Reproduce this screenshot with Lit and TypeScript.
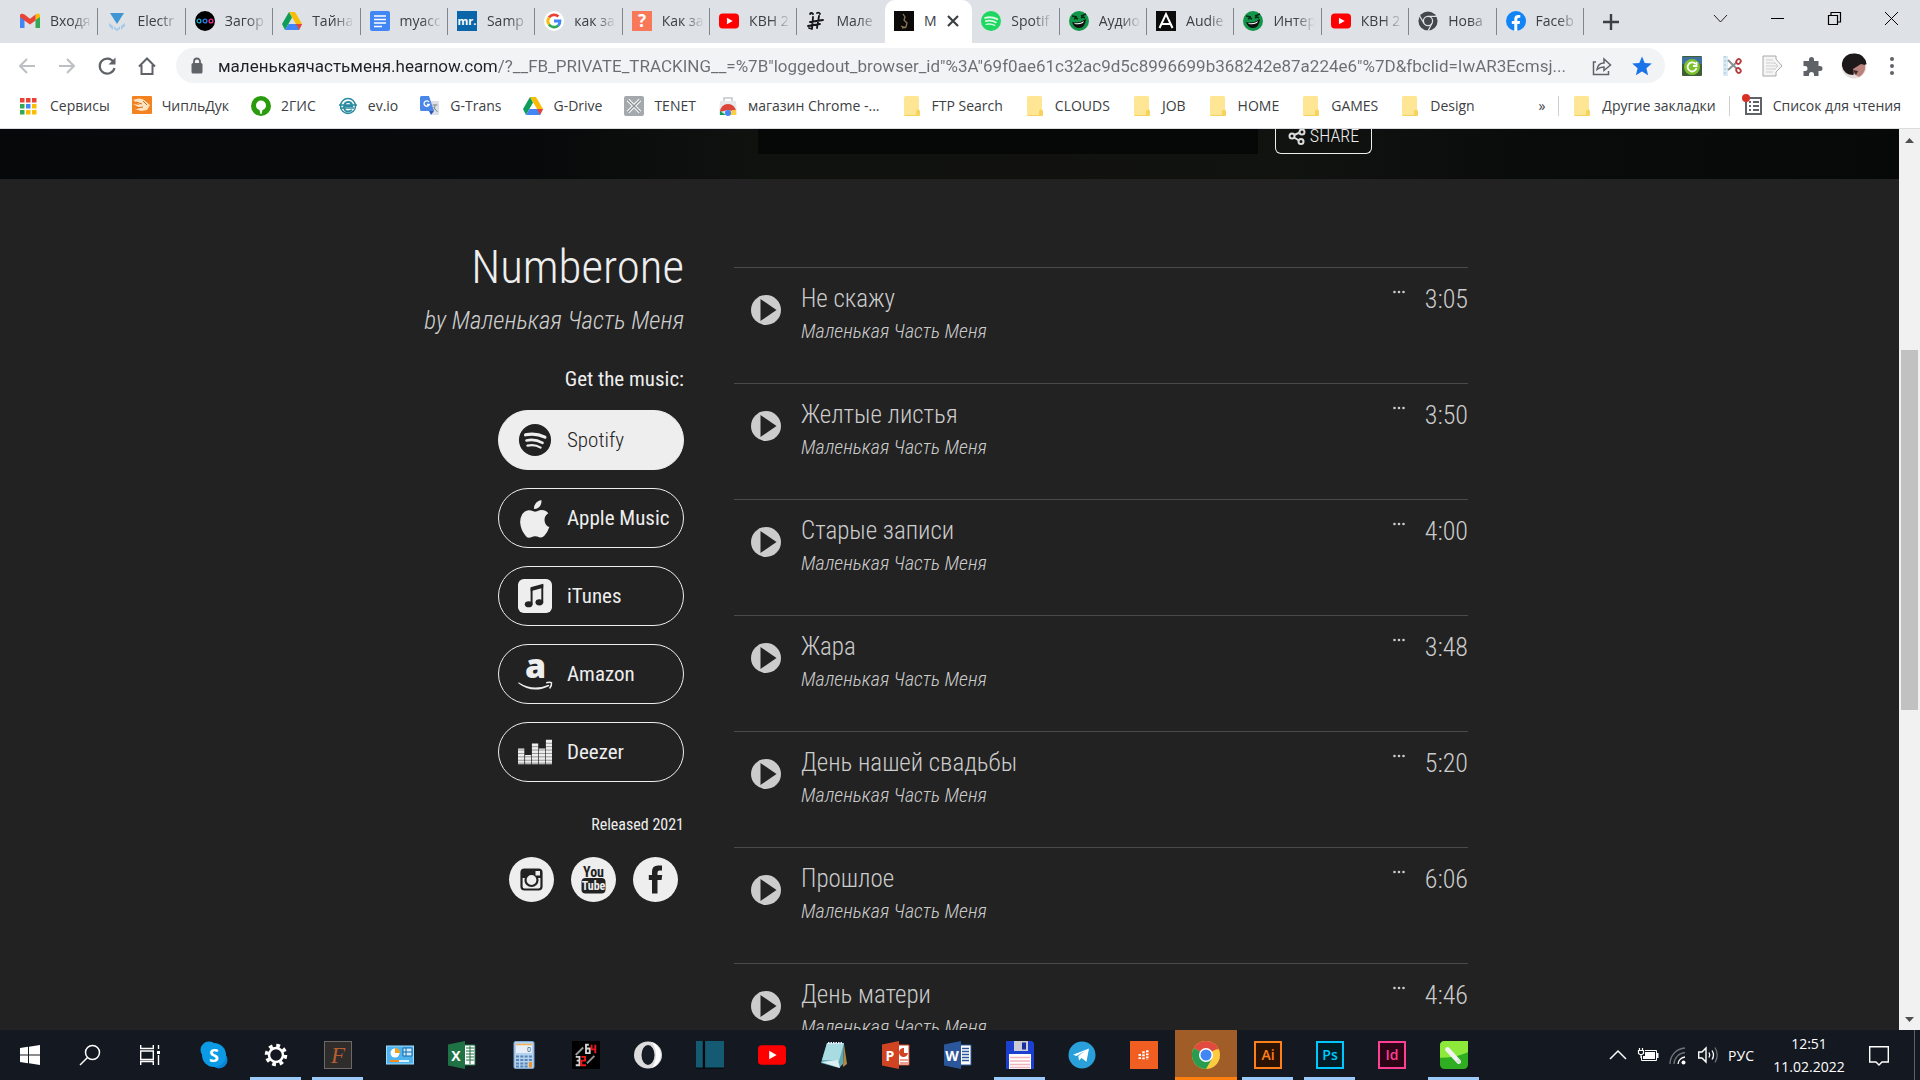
import { LitElement, html, css, svg } from "lit";
import { customElement, state } from "lit/decorators.js";
import { classMap } from "lit/directives/class-map.js";
import { styleMap } from "lit/directives/style-map.js";

const v = (box: string, body: unknown) => html`<svg viewBox=${box} aria-hidden="true">${body}</svg>`;

const drive = () => v("0 0 20 18", svg`<path d="M7 0h6l7 12h-6z" fill="#fbbc04"/><path d="M7 0l3 5.500L3 18 0 12z" fill="#0f9d58"/><path d="M6.500 12H20l-3 6H3z" fill="#4285f4"/><path d="M14 12h6l-3 6z" fill="#ea4335"/>`);
const youtube = () => v("0 0 24 24", svg`<rect y="3" width="24" height="18" rx="4.500" fill="#f00"/><path d="M9.500 8v8l7-4z" fill="#fff"/>`);
const mask = () => v("0 0 20 20", svg`<circle cx="10" cy="10" r="10" fill="#12964a"/><path d="M3 5l5 1M12 5l5-2M5 8l2-1 2 1M12 7l2-1 2 1" stroke="#0a2a16" stroke-width="1.600" fill="none"/><path d="M3 11q7 2 14-3-1 9-7 9-5 0-7-6z" fill="#101010"/><path d="M5 12q6 1 10-2l-1 2q-4 2-8 1z" fill="#e9f5ee"/>`);
const spotify = (bg: string, fg: string) => v("0 0 24 24", svg`<circle cx="12" cy="12" r="12" fill=${bg}/><g fill="none" stroke=${fg} stroke-linecap="round"><path d="M5 8.300q7.500-2 14.500 1.500" stroke-width="2.300"/><path d="M5.700 12.200q6.500-1.700 12.300 1.500" stroke-width="2"/><path d="M6.200 16q5.500-1.300 10.300 1.300" stroke-width="1.600"/></g>`);
const folder = () => v("0 0 20 20", svg`<path d="M2 1.500A1.500 1.500 0 0 1 3.500 0h12A1.500 1.500 0 0 1 17 1.500V20H3.500A1.500 1.500 0 0 1 2 18.500z" fill="#ffe694"/><path d="M14 20v-4a2 2 0 0 1 4-1v4a1 1 0 0 1-1 1z" fill="#f8d35c"/><path d="M2.500 19.500h14" stroke="#f5d25a"/>`);
const chromeIcon = (r: string, g: string, y: string, b: string) => v("0 0 24 24", svg`<circle cx="12" cy="12" r="12" fill=${y}/><path d="M12 12L1.600 6A12 12 0 0 1 22.400 6z" fill=${r}/><path d="M1.600 6A12 12 0 0 0 12 24l5.200-9L12 12z" fill=${g}/><path d="M12 6h10.400a12 12 0 0 1 .5 1H12z" fill=${r}/><circle cx="12" cy="12" r="6" fill="#fff"/><circle cx="12" cy="12" r="4.700" fill=${b}/>`);

const tabIcons = {
  gmail: v("0 0 20 16", svg`<path d="M0 2v13h4.500V6z" fill="#4285f4"/><path d="M15.500 15H20V2l-4.500 4z" fill="#34a853"/><path d="M15.500 1.500V7L20 4V2.500c0-2-2.500-3-4.500-1z" fill="#fbbc04"/><path d="M0 2.500V4l4.500 3.500L10 11.500l5.500-4V1.500L10 5.700 4.500 1.500C2.500 0 0 .5 0 2.500z" fill="#ea4335"/>`),
  electro: v("0 0 20 20", svg`<path d="M3 2h14l-7 11z" fill="#3f96d4"/><path d="M2 12l4 3v4l-4-4zM18 12l-4 3v4l4-4zM7 15l3 3 3-3v3l-3 2-3-2z" fill="#a5cbe8"/>`),
  dots: v("0 0 20 20", svg`<circle cx="10" cy="10" r="10"/><g fill="none" stroke-width="1.300"><circle cx="4" cy="10" r="1.900" stroke="#17a9c9"/><circle cx="10" cy="10" r="1.900" stroke="#267cf0"/><circle cx="16" cy="10" r="1.900" stroke="#f02b8c"/></g>`),
  drive: drive(),
  docs: v("0 0 20 20", svg`<rect width="20" height="20" rx="2" fill="#4285f4"/><path d="M4 5h12M4 8.500h12M4 12h12M4 15.500h8" stroke="#fff" stroke-width="1.700"/>`),
  mr: v("0 0 20 20", svg`<rect width="20" height="20" fill="#0a66a8"/><text x="10" y="14" font-size="11" font-weight="700" text-anchor="middle" fill="#fff">mr.</text>`),
  google: v("0 0 20 20", svg`<circle cx="10" cy="10" r="10" fill="#fff"/><g fill="none" stroke-width="2.800"><path d="M5 6.500A6.200 6.200 0 0 1 14.400 5.600" stroke="#ea4335"/><path d="M5 6.500a6.200 6.200 0 0 0 0 7" stroke="#fbbc04"/><path d="M5 13.500a6.200 6.200 0 0 0 9.300 1" stroke="#34a853"/><path d="M14.300 14.500A6 6 0 0 0 16 10h-6" stroke="#4285f4"/></g>`),
  question: v("0 0 20 20", svg`<rect width="20" height="20" fill="#f8795a"/><text x="10" y="16" font-size="17" font-weight="700" text-anchor="middle" fill="#fff">?</text>`),
  youtube: youtube(),
  male: v("0 0 20 20", svg`<path d="M4 3q1-2 3 0M11 2q2-1 3 1M7 6L6 18M13 5l-2 12M4 11l13-2M2 15l12-2M6 18l-3-1" fill="none" stroke="#15161a" stroke-width="1.800" stroke-linecap="round"/>`),
  album: v("0 0 20 20", svg`<rect width="20" height="20" fill="#0b0a09"/><path d="M9 3l2 3-1 3 3 3-1 4-4 1M7 15l5 2" stroke="#8d7650" fill="none" stroke-width="1.300"/>`),
  spotify: spotify("#1ed760", "#d9f8e4"),
  mask: mask(),
  audie: v("0 0 20 20", svg`<rect width="20" height="20" fill="#0c0c0c"/><path d="M3.500 17L10 3l6.500 14M6 13h8" fill="none" stroke="#fff" stroke-width="2"/>`),
  chrome: v("0 0 24 24", svg`<circle cx="12" cy="12" r="11.500" fill="#44484c"/><g fill="none" stroke="#dee1e6" stroke-width="1.500"><circle cx="12" cy="12" r="5.500"/><path d="M12 6.500h11M7.200 14.800L2 6M16.800 14.800L12 24"/></g>`),
  facebook: v("0 0 20 20", svg`<circle cx="10" cy="10" r="10" fill="#1384f5"/><path d="M8.300 20v-7H5.800v-3h2.500V8q0-4 4-4h2v2.700h-1.500q-1.500 0-1.500 1.500V10h2.800l-.5 3h-2.300v7z" fill="#fff"/>`),
};

const tabs: [keyof typeof tabIcons, string][] = [
  ["gmail", "Входя"], ["electro", "Electr"], ["dots", "Загор"], ["drive", "Тайна"], ["docs", "myacc"],
  ["mr", "Samp"], ["google", "как за"], ["question", "Как за"], ["youtube", "КВН 2"], ["male", "Мале"],
  ["album", "М"], ["spotify", "Spotif"], ["mask", "Аудио"], ["audie", "Audie"], ["mask", "Интер"],
  ["youtube", "КВН 2"], ["chrome", "Нова"], ["facebook", "Faceb"],
];

const host = "маленькаячастьменя.hearnow.com";
const query = '/?__FB_PRIVATE_TRACKING__=%7B"loggedout_browser_id"%3A"69f0ae61c32ac9d5c8996699b368242e87a224e6"%7D&fbclid=IwAR3Ecmsj...';

const bookmarks: [unknown, string][] = [
  [v("0 0 20 20", svg`<g fill="#ea4335"><path d="M0 2h4.500v4.500H0zM6 2h4.500v4.500H6zM12 2h4.500v4.500H12z"/></g><path d="M0 8h4.500v4.500H0zM0 14h4.500v4.500H0z" fill="#34a853"/><path d="M6 8h4.500v4.500H6z" fill="#4285f4"/><path d="M6 14h4.500v4.500H6zM12 8h4.500v4.500H12zM12 14h4.500v4.500H12z" fill="#fbbc04"/>`), "Сервисы"],
  [v("0 0 20 20", svg`<rect width="20" height="18" rx="1" fill="#f58220"/><path d="M1 4q7-3 11 0l6 5-3 5-6 1-6-2 5-1-7-4 7 1z" fill="#fde3c2"/><path d="M4 6l6 2M4 12l7-1M11 5l4 4" stroke="#d96c12"/>`), "ЧипльДук"],
  [v("0 0 20 20", svg`<circle cx="10" cy="10" r="10" fill="#2a9b0d"/><path d="M10 4.500a5 5 0 0 1 5 5q0 3-3.500 4.500L10.500 18h-1L8.500 14Q5 12.500 5 9.500a5 5 0 0 1 5-5z" fill="#fff"/>`), "2ГИС"],
  [v("0 0 20 20", svg`<g fill="none" stroke="#2b8ba0"><circle cx="10" cy="10" r="7.500" stroke-width="1.500"/><path d="M1 9h18M2 12h14" stroke-width="1.500"/><path d="M14 14q-6 4-8-2 0-6 4-6t4 4H6" stroke-width="2"/></g>`), "ev.io"],
  [v("0 0 20 20", svg`<path d="M8 5h10a1 1 0 0 1 1 1v12a1 1 0 0 1-1 1h-6z" fill="#dcdfe3"/><path d="M0 1.500A1.500 1.500 0 0 1 1.500 0H9l5 15H1.500A1.500 1.500 0 0 1 0 13.500z" fill="#4a86e8"/><path d="M9 15h5l-3 4z" fill="#2a56c6"/><path d="M9 6a2.700 2.700 0 1 0 .3 2.500H7" fill="none" stroke="#fff" stroke-width="1.300"/><path d="M12.500 9h5M15 8v1q0 4-2 6M13.500 11l4 5" fill="none" stroke="#8a9098"/>`), "G-Trans"],
  [drive(), "G-Drive"],
  [v("0 0 20 20", svg`<rect width="20" height="20" rx="2" fill="#a4a9ad"/><path d="M4 4l12 12M16 4L4 16" stroke="#f4f5f6" stroke-width="3.500"/><path d="M4 4l12 12M16 4L4 16" stroke="#8b9094" stroke-width="1.200"/>`), "TENET"],
  [v("0 0 20 20", svg`<path d="M6 5V2h8v3" fill="none" stroke="#c3c6ca" stroke-width="1.500"/><path d="M2 5h16l1 14H1z" fill="#e6e8ea"/><path d="M2 16a8 8 0 0 1 16 0l-8-2z" fill="#db4437"/><path d="M2 15l6 4H2z" fill="#0f9d58"/><path d="M14 14h4v5h-6z" fill="#ffcd40"/><circle cx="10" cy="17" r="3" fill="#4285f4"/>`), "магазин Chrome -..."],
  [folder(), "FTP Search"], [folder(), "CLOUDS"], [folder(), "JOB"], [folder(), "HOME"], [folder(), "GAMES"], [folder(), "Design"],
];

const services: [unknown, string][] = [
  [v("0 0 36 36", svg`<circle cx="18" cy="18" r="17" fill="#222"/><g fill="none" stroke="#eee" stroke-linecap="round"><path d="M8 12.500q10.500-2.500 20.500 2.500" stroke-width="3.400"/><path d="M9 18.500q9-2 17 2.500" stroke-width="2.800"/><path d="M10 24q7.500-2 14 2" stroke-width="2.300"/></g>`), "Spotify"],
  [v("0 0 32 36", svg`<path d="M22 0q.5 4-2 6.500-2.300 2.300-5 2 0-3.500 2-5.800Q19 .5 22 0z" fill="#eee"/><path d="M28.500 12.500q-4 2.500-3.500 7 .5 4.500 4.500 6-1.500 4.500-4.500 8-2.300 2.500-5 1.500-4-1.600-7.500 0-3 1.200-5-1-5-5.500-5.500-13Q2.500 11 9.500 9.700q2.500-.2 5 1 1.500.6 3.500-.2 6.500-2.800 10.500 2z" fill="#eee"/>`), "Apple Music"],
  [v("0 0 35 35", svg`<rect width="35" height="35" rx="6" fill="#eee"/><path d="M14 26V10l11-3v17" fill="none" stroke="#222" stroke-width="2"/><path d="M13 8.500l13-3.500v4L13 12.500z" fill="#222"/><ellipse cx="11" cy="26" rx="4" ry="3.200" fill="#222"/><ellipse cx="22" cy="24" rx="4" ry="3.200" fill="#222"/>`), "iTunes"],
  [v("0 0 35 35", svg`<text x="18" y="22" font-size="35" font-weight="800" text-anchor="middle" fill="#eee">a</text><path d="M.5 26q15 9.500 31 2.500l.8 1.300Q15 38.500.2 27z" fill="#eee"/><path d="M29 26.500q4-1 5.500 0 .5 3-2 6" fill="none" stroke="#eee" stroke-width="1.500"/>`), "Amazon"],
  [v("0 0 35 25", svg`<path d="M0 9h6.500v16H0zM7.300 15.500h6.300V25H7.300zM14.300 3.500h6.500V25h-6.500zM21.500 9H28v16h-6.500zM28.700 0H35v25h-6.300z" fill="#eee"/><path d="M0 3.500h35M0 7h35M0 10.500h35M0 14h35M0 17.500h35M0 21h35M0 24h35" stroke="#222" stroke-opacity=".45" stroke-width="1"/>`), "Deezer"],
];

const socials: [unknown, string][] = [
  [v("0 0 45 45", svg`<circle cx="22.500" cy="22.500" r="22.500" fill="#eee"/><rect x="12.500" y="12.500" width="20" height="20" rx="3" fill="none" stroke="#222" stroke-width="2.200"/><path d="M13 13h19v8H13z" fill="#222"/><circle cx="22.500" cy="23" r="6" fill="#eee" stroke="#222" stroke-width="2.200"/><rect x="26.500" y="14" width="4.500" height="4.500" fill="#eee"/>`), "Instagram"],
  [v("0 0 45 45", svg`<circle cx="22.500" cy="22.500" r="22.500" fill="#eee"/><text x="22.500" y="19.500" font-size="14" font-weight="700" class="narrow" text-anchor="middle" fill="#222">You</text><rect x="10.500" y="21" width="24" height="15.500" rx="4" fill="#222"/><text x="22.500" y="33" font-size="12" font-weight="700" class="narrow" text-anchor="middle" fill="#eee">Tube</text>`), "YouTube"],
  [v("0 0 45 45", svg`<circle cx="22.500" cy="22.500" r="22.500" fill="#eee"/><path d="M19 36.500V23h-3.200v-5H19v-3.500q0-6 6-6h4v5h-2.500q-2 0-2 2V18h4.700l-.6 5h-4.100v13.500z" fill="#222"/>`), "Facebook"],
];

const artist = "Маленькая Часть Меня";
const tracks = [
  ["Не скажу", "3:05"], ["Желтые листья", "3:50"], ["Старые записи", "4:00"], ["Жара", "3:48"],
  ["День нашей свадьбы", "5:20"], ["Прошлое", "6:06"], ["День матери", "4:46"],
];

const adobe = (t: string, line: string, bg: string) => v("0 0 28 28", svg`<rect x="1" y="1" width="26" height="26" fill=${bg} stroke=${line} stroke-width="2"/><text x="14" y="19" font-size="14" font-weight="600" text-anchor="middle" fill=${line}>${t}</text>`);
const office = (t: string, bg: string, body: unknown) => v("0 0 28 28", svg`<path d="M15 4h12v20H15z" fill="#fff" stroke=${bg}/>${body}<path d="M0 3.500L17 0v28L0 24.500z" fill=${bg}/><text x="8" y="19.500" font-size="14" font-weight="700" text-anchor="middle" fill="#fff">${t}</text>`);

const apps: { name: string; icon: unknown; state?: "open" | "active" }[] = [
  { name: "Skype", icon: v("0 0 28 28", svg`<circle cx="9" cy="9" r="8.500" fill="#0e9ae0"/><circle cx="19" cy="19" r="8.500" fill="#0a84d6"/><circle cx="14" cy="14" r="12" fill="#0b9be6"/><text x="14" y="20.500" font-size="18" font-weight="700" text-anchor="middle" fill="#fff">S</text>`) },
  { name: "Settings", state: "open", icon: v("0 0 28 28", svg`<g fill="none" stroke="#fff"><circle cx="14" cy="14" r="7" stroke-width="2.500"/><circle cx="14" cy="14" r="9.500" stroke-width="3.500" stroke-dasharray="3.730 3.731"/></g>`) },
  { name: "FontLab", state: "open", icon: v("0 0 28 28", svg`<rect x=".5" y=".5" width="27" height="27" fill="#2f2d2c" stroke="#6b6866"/><text x="14" y="22" font-size="23" class="serif" font-style="italic" text-anchor="middle" fill="#b75f33">F</text>`) },
  { name: "Display", icon: v("0 0 28 28", svg`<rect x=".5" y="5" width="27" height="18" fill="#4fb4ee" stroke="#9ddcff"/><circle cx="9" cy="12" r="4.500" fill="#fff"/><path d="M9 12V7a5 5 0 0 1 5 5z" fill="#f7a11a"/><path d="M17 7h9v8h-9zM17 11h9M20 7v8" stroke="#1669a8" fill="#c9ecff"/><path d="M4 20h19" stroke="#d8f2ff" stroke-width="2"/><path d="M4 20h9" stroke="#f58a1e" stroke-width="2"/>`) },
  { name: "Excel", icon: office("X", "#1f7244", svg`<path d="M18 7h8M18 10h8M18 13h8M18 16h8M18 19h8M22 5v18" stroke="#1f7244"/>`) },
  { name: "Calculator", icon: v("0 0 28 28", svg`<rect x="4" y=".5" width="20" height="27" rx="1.500" fill="#b5d3ee" stroke="#7fa8cf"/><rect x="6" y="3" width="16" height="9" fill="#e4effa"/><path d="M6 3.500h16" stroke="#f5b25a" stroke-width="1.500"/><text x="19" y="11" font-size="7" text-anchor="middle" fill="#245">0</text><path d="M6 15.500h16M6 19h16M6 22.500h12M6 25.500h12" stroke="#5885b5" stroke-width="2" stroke-dasharray="3 1.300"/><path d="M20.500 21v5.500" stroke="#f0932b" stroke-width="3"/>`) },
  { name: "3264", icon: v("0 0 30 30", svg`<rect width="30" height="30" fill="#000"/><g fill="none" stroke-width="2"><path d="M4 15l8-8M16 24l8-8" stroke="#999"/><path d="M18 4h-3v9h4V8h-4M4 17h4v9H4M5 21h3" stroke="#d5d5d5"/><path d="M21 4v5h4M25 4v9M10 17h4v4h-4v5h5" stroke="#f01818"/></g>`) },
  { name: "Opera", icon: v("0 0 28 28", svg`<ellipse cx="14" cy="14" rx="14" ry="13.500" fill="#dcdcdc"/><path d="M18 1a14 14 0 0 1 0 26q8-13 0-26z" fill="#fff"/><ellipse cx="14" cy="14" rx="6.500" ry="10" fill="#171b24"/>`) },
  { name: "Book", icon: v("0 0 30 30", svg`<rect width="30" height="29" fill="#145a73"/><path d="M8.500 0v29" stroke="#04080c" stroke-width="2.500"/><path d="M0 29h30" stroke="#000"/>`) },
  { name: "YouTube", icon: v("0 0 30 30", svg`<rect y="4.500" width="30" height="21" rx="4" fill="#f00"/><path d="M12 10.500v9l8-4.500z" fill="#fff"/>`) },
  { name: "Notepad", icon: v("0 0 28 28", svg`<path d="M24 3l3 20-4 3z" fill="#b08b46"/><path d="M7 2h17l-1 21-4 4L1 22z" fill="#5fa9b6"/><path d="M7 2h17l-5 18L2 19z" fill="#a9dbe2"/><path d="M8 2h15" stroke="#eef" stroke-width="2" stroke-dasharray="1.500 1"/><path d="M1 21l17-2 2 8z" fill="#dceff2"/>`) },
  { name: "PowerPoint", icon: office("P", "#d04423", svg`<path d="M22 7a4.500 4.500 0 1 0 4 5h-4z" fill="#d04423"/><path d="M18 19h8M18 22h8" stroke="#d04423"/>`) },
  { name: "Word", icon: office("W", "#2b579a", svg`<path d="M18 7.500h7M18 10.500h7M18 13.500h7M18 16.500h7M18 19.500h7" stroke="#2b579a" stroke-width="1.500"/>`) },
  { name: "Total Commander", state: "open", icon: v("0 0 28 28", svg`<path d="M0 0h26l2 2v26H0z" fill="#1d3fd0"/><rect x="8" width="14" height="10" fill="#c9ccd6"/><rect x="16" y="1.500" width="4" height="7" fill="#1b2f9c"/><rect x="3" y="13" width="22" height="15" fill="#fff"/><path d="M4 16.500h20M4 20h20M4 23.500h20M4 26.500h20" stroke="#f2b5bd" stroke-width="1.500"/>`) },
  { name: "Telegram", icon: v("0 0 28 28", svg`<circle cx="14" cy="14" r="13.500" fill="#29a0da"/><path d="M5 13.700L21 7.500l-2.500 13.300-5-3.700-2.500 2.500-.7-4.500L17 10l-8.500 5z" fill="#fff"/>`) },
  { name: "Music stand", icon: v("0 0 30 30", svg`<rect width="30" height="30" fill="#f05e22"/><path d="M10.500 14v6M14.500 11v9M18.500 10v10" stroke="#fff" stroke-width="2.700" stroke-dasharray="2 1.300"/>`) },
  { name: "Chrome", state: "active", icon: chromeIcon("#e04a3f", "#2a9c51", "#fdcb3f", "#4285f4") },
  { name: "Illustrator", state: "open", icon: adobe("Ai", "#ff7f18", "#2a1304") },
  { name: "Photoshop", state: "open", icon: adobe("Ps", "#00c8ff", "#001d26") },
  { name: "InDesign", icon: adobe("Id", "#ff3f94", "#2b0415") },
  { name: "CorelDRAW", state: "open", icon: v("0 0 30 30", svg`<path d="M0 5q0-5 5-5h25v25q0 5-5 5H5q-5 0-5-5z" fill="#2fae22"/><path d="M0 5q0-5 5-5h25v12q-14 6-30 6z" fill="#8eea3a"/><path d="M8 9l12 13" stroke="#f2f2f2" stroke-width="5" stroke-linecap="round"/><path d="M20 19l3 5-6-2z" fill="#dedede"/>`) },
];

@customElement("browser-chrome")
class BrowserChrome extends LitElement {
  @state() private hostWidth = 0;

  static styles = css`
    :host { display: block; min-width: 0; background: #fff; color: #3c4043; font: 14px/20px "Open Sans", "Noto Sans", sans-serif; }
    svg { display: block; width: 100%; height: 100%; overflow: visible; }
    svg text { font-family: "Open Sans", sans-serif; }
    button { appearance: none; border: 0; background: none; padding: 0; margin: 0; color: inherit; font: inherit; }
    .strip { display: flex; height: 43px; background: #dee1e6; padding-left: 11px; }
    .tabs { display: grid; grid-auto-flow: column; grid-auto-columns: minmax(0, 1fr); flex: 1; min-width: 0; }
    .tab { display: flex; min-width: 0; align-items: center; gap: 10px; box-sizing: border-box; padding: 0 0 1px 9px; height: 43px; border-right: 1px solid transparent; border-image: linear-gradient(transparent 9px, #80868b 9px, #80868b 34px, transparent 34px) 1; }
    .tab .ico, .mark .ico { width: 20px; height: 20px; flex: none; }
    .title { flex: 1; min-width: 0; overflow: hidden; white-space: nowrap; text-align: left; mask-image: linear-gradient(90deg, #000 22px, transparent 42px); }
    .active, .before { border-image: none; }
    .active { background: #fff; border-radius: 10px 10px 0 0; padding-right: 12px; }
    .active .title { mask-image: none; }
    .close { width: 12px; height: 12px; flex: none; }
    .controls { display: flex; justify-content: space-between; width: 336px; }
    .controls button { display: grid; place-items: center; width: 57px; height: 36px; }
    .controls .plus { width: 54px; height: 43px; }
    .window { display: flex; }
    .g12 { width: 13px; height: 13px; }
    .g16 { width: 16px; height: 16px; }
    .g22 { width: 22px; height: 22px; }
    .bar { display: flex; align-items: center; height: 45px; padding: 0 19px 0 16px; }
    .nav { display: grid; place-items: center; width: 22px; height: 22px; margin-right: 18px; }
    .omni { display: flex; flex: 1; align-items: center; height: 35px; border-radius: 18px; background: #f1f3f4; padding: 0 12px 0 10px; gap: 10px; }
    .omni input { flex: 1; min-width: 0; border: 0; outline: 0; padding: 0; height: 30px; font: 17px/30px Roboto, "Open Sans", sans-serif; background: linear-gradient(90deg, #202124 var(--host-width), #6a6e73 var(--host-width)); -webkit-background-clip: text; background-clip: text; color: transparent; }
    .acts { display: flex; gap: 18px; }
    .ext { display: flex; align-items: center; gap: 18px; padding-left: 16px; }
    .ext .menu { width: 16px; }
    .ava { width: 26px; height: 26px; }
    .marks { display: flex; align-items: center; height: 36px; padding: 0 19px 4px 20px; border-bottom: 1px solid #dadce0; gap: 22px; }
    .mark { display: flex; align-items: center; gap: 10px; color: inherit; text-decoration: none; white-space: nowrap; }
    .spacer { flex: 1; }
    .rule { width: 1px; height: 20px; background: #cdd0d4; }
    .tail { display: flex; align-items: center; gap: 13px; }
  `;

  firstUpdated() {
    const input = this.renderRoot.querySelector("input")!;
    const pen = document.createElement("canvas").getContext("2d")!;
    pen.font = getComputedStyle(input).font;
    this.hostWidth = Math.round(pen.measureText(host).width);
  }

  render() {
    return html`
      <div class="strip">
        <div class="tabs" role="tablist">
          ${tabs.map(([k, t], i) => html`<div role="tab" class=${classMap({ tab: true, active: i === 10, before: i === 9 })}>
            <span class="ico">${tabIcons[k]}</span><span class="title">${t}</span>
            ${i === 10 ? html`<button class="close" aria-label="Закрыть">${v("0 0 12 12", svg`<path d="M1 1l10 10M11 1L1 11" stroke="#3c4043" stroke-width="2.200"/>`)}</button>` : ""}
          </div>`)}
        </div>
        <div class="controls">
          <button class="plus" aria-label="Новая вкладка"><span class="g16">${v("0 0 16 16", svg`<path d="M8 0v16M0 8h16" stroke="#3c4043" stroke-width="2.400"/>`)}</span></button>
          <div class="window">
            <button aria-label="Поиск вкладок"><span class="g12">${v("0 0 13 13", svg`<path d="M0 3l6.500 7L13 3" fill="none" stroke="#222"/>`)}</span></button>
            <button aria-label="Свернуть"><span class="g12">${v("0 0 13 13", svg`<path d="M0 6.500h13" stroke="#000"/>`)}</span></button>
            <button aria-label="Окно"><span class="g12">${v("0 0 13 13", svg`<path d="M.5 3.500h9v9h-9zM3 3V.5h9.500V10H10" fill="none" stroke="#000" stroke-width="1.200"/>`)}</span></button>
            <button aria-label="Закрыть окно"><span class="g12">${v("0 0 13 13", svg`<path d="M0 0l13 13M13 0L0 13" stroke="#000"/>`)}</span></button>
          </div>
        </div>
      </div>
      <div class="bar">
        <button class="nav" aria-label="Назад">${v("0 0 22 22", svg`<path d="M19 11H4M11 4l-7 7 7 7" fill="none" stroke="#bcbfc3" stroke-width="2"/>`)}</button>
        <button class="nav" aria-label="Вперёд">${v("0 0 22 22", svg`<path d="M3 11h15M11 4l7 7-7 7" fill="none" stroke="#bcbfc3" stroke-width="2"/>`)}</button>
        <button class="nav" aria-label="Обновить">${v("0 0 22 22", svg`<path d="M17.500 7A7.500 7.500 0 1 0 18.500 13" fill="none" stroke="#5f6368" stroke-width="2.200"/><path d="M19.500 2.500v7h-7z" fill="#5f6368"/>`)}</button>
        <button class="nav" aria-label="Домой">${v("0 0 22 22", svg`<path d="M5.500 10v9h11v-9M3 11.500l8-8 8 8" fill="none" stroke="#5f6368" stroke-width="2"/>`)}</button>
        <div class="omni">
          <span class="g22">${v("0 0 22 22", svg`<rect x="5.500" y="8" width="11" height="10.500" rx="1.500" fill="#5f6368"/><path d="M8 9V6.500a3 3 0 0 1 6 0V9" fill="none" stroke="#5f6368" stroke-width="1.800"/>`)}</span>
          <input aria-label="Адрес" .value=${host + query} style=${styleMap({ "--host-width": `${this.hostWidth}px` })}>
          <div class="acts">
            <button class="g22" aria-label="Поделиться">${v("0 0 22 22", svg`<path d="M5 7H2.500v12.500h15V16M6 14.500Q7 8 13 8V4l6.500 6L13 15.500V12q-4 0-7 2.500z" fill="none" stroke="#5f6368" stroke-width="1.500"/>`)}</button>
            <button class="g22" aria-label="Закладка">${v("0 0 22 22", svg`<path d="M11 1.500l2.700 6.600 7.100.5-5.400 4.600 1.700 7L11 16.400l-6.100 3.800 1.700-7L1.200 8.600l7.100-.5z" fill="#1a73e8"/>`)}</button>
          </div>
        </div>
        <div class="ext">
          <button class="g22" aria-label="Перезагрузка">${v("0 0 22 22", svg`<rect x="1" y="1" width="20" height="20" rx="1" fill="#3e5f36"/><rect x="1" y="2" width="20" height="7" fill="#3f6fa0"/><circle cx="11" cy="12" r="8" fill="#7cc22c"/><path d="M14.500 9a4.500 4.500 0 1 0 1 4M15.500 7v4H12" fill="none" stroke="#fff" stroke-width="1.800"/>`)}</button>
          <button class="g22" aria-label="Вырезать">${v("0 0 22 22", svg`<path d="M2 1h5v20H2z" fill="#dbeaf3"/><path d="M4 1v20" stroke="#9fc1d6" stroke-dasharray="2 2"/><path d="M7 5l9 9M16 7l-9 8" stroke="#8a8f94" stroke-width="2"/><ellipse cx="17.500" cy="6.500" rx="2" ry="2.600" fill="none" stroke="#b5383a" stroke-width="1.800" transform="rotate(35 17.500 6.500)"/><ellipse cx="17.500" cy="15.500" rx="2" ry="2.600" fill="none" stroke="#b5383a" stroke-width="1.800" transform="rotate(-35 17.500 15.500)"/>`)}</button>
          <button class="g22" aria-label="Заметка">${v("0 0 22 22", svg`<path d="M2 1h13v3l6 7-6 6v4H2z" fill="#f5f5f5" stroke="#a8a8a8"/><path d="M5 5h7M5 8h9M5 11h12M5 14h9M5 17h7M13 7l4 4-4 4" stroke="#cfcfcf" fill="none"/>`)}</button>
          <button class="g22" aria-label="Расширения">${v("0 0 22 22", svg`<path d="M2.500 6H8V4.500a2.500 2.500 0 0 1 5 0V6h4.500v5H19a2.500 2.500 0 0 1 0 5h-1.500v5H13v-1.500a2.500 2.500 0 0 0-5 0V21H2.500v-5H4a2.500 2.500 0 0 0 0-5H2.500z" fill="#5f6368"/>`)}</button>
          <button class="ava" aria-label="Профиль">${v("0 0 26 26", svg`<circle cx="13" cy="13" r="12.500" fill="#e6dcdc"/><path d="M1 10Q3 0 14 .5 24 1 25.500 11q-3 2-5 1l-7 4-1 6Q3 22 1 13z" fill="#1d191b"/><path d="M12 16l8-5 4 1q1 8-6 12l-5-3z" fill="#b9827b"/><path d="M12 17l5 1-2 4z" fill="#3a2a2b"/>`)}</button>
          <button class="menu" aria-label="Меню">${v("0 0 16 22", svg`<g fill="#5f6368"><circle cx="7" cy="4" r="2"/><circle cx="7" cy="11" r="2"/><circle cx="7" cy="18" r="2"/></g>`)}</button>
        </div>
      </div>
      <nav class="marks">
        ${bookmarks.map(([i, t]) => html`<a class="mark" href="#"><span class="ico">${i}</span>${t}</a>`)}
        <span class="spacer"></span>
        <div class="tail">
          <button aria-label="Ещё закладки">»</button><span class="rule"></span>
          <a class="mark" href="#"><span class="ico">${folder()}</span>Другие закладки</a><span class="rule"></span>
          <a class="mark" href="#"><span class="ico">${v("0 0 20 20", svg`<rect x="3" y="2" width="15" height="16" fill="none" stroke="#5f6368" stroke-width="2"/><path d="M6 6h2M10 6h6M6 10h2M10 10h6M6 14h2M10 14h6" stroke="#5f6368" stroke-width="2"/><circle cx="3" cy="2" r="4" fill="#d93025"/>`)}</span>Список для чтения</a>
        </div>
      </nav>`;
  }
}

@customElement("album-page")
class AlbumPage extends LitElement {
  static styles = css`
    :host { display: flex; min-height: 0; overflow: hidden; background: #222; color: #eee; font-family: "Roboto Condensed", "Liberation Sans Narrow", sans-serif; font-weight: 300; }
    svg { display: block; width: 100%; height: 100%; overflow: visible; }
    svg text { font-family: "Open Sans", sans-serif; }
    svg text.narrow { font-family: "Roboto Condensed", "Liberation Sans Narrow", sans-serif; }
    button { appearance: none; background: none; border: 0; padding: 0; margin: 0; color: inherit; font: inherit; }
    h1, h2, h3, p, ol { margin: 0; padding: 0; font-weight: inherit; list-style: none; }
    a { color: inherit; text-decoration: none; }
    .page { flex: 1; min-width: 0; overflow: hidden; }
    .hero { height: 50px; background: linear-gradient(90deg, #070809 0%, #08090a 28%, #101210 40%, #11120f 55%, #111311 68%, #0a0b0b 80%, #070808 100%); }
    .wrap { display: grid; grid-template-columns: 284px 734px; column-gap: 50px; width: 1068px; margin: 0 auto; padding-right: 31px; align-items: start; }
    .top { display: grid; grid-template-columns: 500px 97px; column-gap: 17px; width: 972px; padding-right: 127px; margin: 0 auto; justify-content: end; }
    .player { height: 25px; background: #060707; }
    .share { display: flex; align-items: flex-end; justify-content: center; gap: 4px; height: 25px; border: 1px solid #eee; border-top: 0; border-radius: 0 0 6px 6px; box-sizing: border-box; font-size: 18px; line-height: 20px; padding-bottom: 7px; }
    .share span { width: 18px; height: 18px; }
    .info { display: flex; flex-direction: column; align-items: flex-end; text-align: right; padding-top: 55px; white-space: nowrap; }
    h1 { font-size: 47px; line-height: 66px; }
    .by { font-size: 25px; line-height: 42px; font-style: italic; color: #cfcfcf; }
    .get { font-size: 21px; line-height: 30px; padding-top: 22px; font-weight: 400; }
    .services { display: flex; flex-direction: column; gap: 18px; width: 186px; padding-top: 16px; }
    .service { display: flex; align-items: center; gap: 15px; height: 60px; box-sizing: border-box; border: 1px solid #eee; border-radius: 30px; padding-left: 19px; font-size: 21px; line-height: 32px; font-weight: 400; }
    .service span { display: grid; place-items: center; width: 34px; height: 36px; }
    .main { background: #eee; color: #222; font-weight: 300; }
    .rel { font-size: 16px; line-height: 24px; padding-top: 31px; font-weight: 400; }
    .socials { display: flex; gap: 17px; padding: 20px 6px 0 0; }
    .socials a { width: 45px; height: 45px; }
    .tracks { padding-top: 88px; color: #ccc; }
    .track { display: grid; grid-template-columns: 67px 1fr 32px 43px; height: 116px; box-sizing: border-box; border-top: 1px solid #4a4a4a; align-items: start; }
    .play { width: 30px; height: 30px; margin: 27px 0 0 17px; }
    .names { padding-top: 15px; }
    h3 { font-size: 25px; line-height: 32px; }
    .names p { font-size: 20px; line-height: 32px; font-style: italic; }
    .dots { width: 12px; height: 4px; margin-top: 22px; }
    .time { font-size: 26px; line-height: 32px; padding-top: 15px; display: flex; justify-content: flex-end; }
    .scroll { display: flex; flex-direction: column; align-items: center; justify-content: space-between; width: 21px; background: #f1f1f1; }
    .scroll button { width: 21px; height: 21px; }
    .rail { flex: 1; display: grid; grid-template-rows: 200fr 360fr 299fr; width: 17px; }
    .thumb { grid-row: 2; background: #c1c1c1; }
  `;
  render() {
    return html`
      <main class="page">
        <div class="hero"><div class="top"><div class="player"></div>
          <button class="share"><span>${v("0 0 18 18", svg`<g fill="none" stroke="#ddd" stroke-width="2"><circle cx="4" cy="8" r="2.500"/><circle cx="14" cy="4" r="2.500"/><circle cx="13" cy="13.500" r="2.500"/><path d="M6 7l6-2.500M6 9.500l5 3"/></g>`)}</span>SHARE</button>
        </div></div>
        <div class="wrap">
          <section class="info">
            <h1>Numberone</h1>
            <h2 class="by">by ${artist}</h2>
            <p class="get">Get the music:</p>
            <div class="services">${services.map(([i, t], n) => html`<a href="#" class=${classMap({ service: true, main: n === 0 })}><span>${i}</span>${t}</a>`)}</div>
            <p class="rel">Released 2021</p>
            <div class="socials">${socials.map(([i, t]) => html`<a href="#" aria-label=${t}>${i}</a>`)}</div>
          </section>
          <ol class="tracks">
            ${tracks.map(([t, d]) => html`<li class="track">
              <button class="play" aria-label="Play">${v("0 0 30 30", svg`<circle cx="15" cy="15" r="15" fill="#ccc"/><path d="M9.500 4v22l16-11z" fill="#222"/>`)}</button>
              <div class="names"><h3>${t}</h3><p>${artist}</p></div>
              <button class="dots" aria-label="More">${v("0 0 12 4", svg`<g fill="#ccc"><circle cx="1.500" cy="2" r="1.300"/><circle cx="6" cy="2" r="1.300"/><circle cx="10.500" cy="2" r="1.300"/></g>`)}</button>
              <span class="time">${d}</span>
            </li>`)}
          </ol>
        </div>
      </main>
      <div class="scroll">
        <button aria-label="Up">${v("0 0 21 21", svg`<path d="M6 14l4.500-5 4.500 5z" fill="#505050"/>`)}</button>
        <div class="rail"><div class="thumb"></div></div>
        <button aria-label="Down">${v("0 0 21 21", svg`<path d="M6 8l4.500 5L15 8z" fill="#505050"/>`)}</button>
      </div>`;
  }
}

@customElement("task-bar")
class TaskBar extends LitElement {
  static styles = css`
    :host { display: flex; min-width: 0; height: 50px; background: #141820; color: #fff; font: 15px/23px "Open Sans", "Noto Sans", sans-serif; }
    svg { display: block; width: 100%; height: 100%; overflow: visible; }
    svg text { font-family: "Open Sans", sans-serif; }
    svg text.serif { font-family: "Liberation Serif", serif; }
    button { display: grid; place-items: center; appearance: none; background: none; border: 0; padding: 0; margin: 0; color: inherit; font: inherit; }
    .sys { display: flex; padding-right: 3px; }
    .sys button { width: 60px; }
    .g20 { width: 20px; height: 20px; }
    .app { width: 62px; height: 50px; box-sizing: border-box; border-bottom: 3px solid transparent; padding-top: 3px; position: relative; }
    .app span { width: 28px; height: 28px; }
    .open::after { content: ""; position: absolute; left: 5px; right: 6px; bottom: -3px; height: 3px; background: #9ccaf9; }
    .active { background: #a15d27; border-bottom-color: #ff7f0e; }
    .spacer { flex: 1; }
    .tray { display: flex; align-items: center; gap: 10px; font-size: 14px; }
    .tray span { display: block; }
    .clock { width: 90px; text-align: center; }
    .note { width: 50px; }
    .edge { width: 5px; margin-left: 10px; border-left: 1px solid #5d6066; height: 50px; }
  `;
  render() {
    return html`
      <div class="sys">
        <button aria-label="Пуск"><span class="g20">${v("0 0 20 20", svg`<path d="M0 3l8-1.200v7.700H0zM9 1.700L20 0v9.500H9zM0 10.500h8v7.700L0 17zM9 10.500h11V20L9 18.300z" fill="#fff"/>`)}</span></button>
        <button aria-label="Поиск"><span class="g20">${v("0 0 20 20", svg`<circle cx="12.500" cy="7.500" r="7" fill="none" stroke="#fff" stroke-width="1.500"/><path d="M7.500 12.500L0 20" stroke="#fff" stroke-width="1.500"/>`)}</span></button>
        <button aria-label="Задачи"><span class="g20">${v("0 0 20 20", svg`<path d="M.7 0v3.500h12.600V0M.7 20v-3.500h12.600V20M.7 6h12.600v8.500H.7zM18.500 0v4M18.500 10v10" fill="none" stroke="#fff" stroke-width="1.400"/><path d="M17 6h3v3h-3z" fill="#fff"/>`)}</span></button>
      </div>
      ${apps.map((a) => html`<button aria-label=${a.name} class=${classMap({ app: true, open: a.state === "open", active: a.state === "active" })}><span>${a.icon}</span></button>`)}
      <span class="spacer"></span>
      <div class="tray">
        <span class="g20">${v("0 0 20 20", svg`<path d="M2 14l8-8 8 8" fill="none" stroke="#fff" stroke-width="1.500"/>`)}</span>
        <span class="g20">${v("0 0 20 20", svg`<path d="M7 5.500h11.500v10h-15V11" fill="none" stroke="#fff"/><path d="M7 7h10v7H5v-3h2zM19 8h1.500v5H19z" fill="#fff"/><path d="M1.500 3v2M4.500 3v2M.5 5.500h5v3l-1.500 1H2L.5 8.500zM3 9.500V13" fill="none" stroke="#fff" stroke-width="1.200"/>`)}</span>
        <span class="g20">${v("0 0 20 20", svg`<g fill="none" stroke="#6f747b" stroke-width="1.300"><path d="M2 19A16 16 0 0 1 17 3"/><path d="M6 19A12 12 0 0 1 17 7.500"/></g><path d="M10 19a8 8 0 0 1 7-7" fill="none" stroke="#fff" stroke-width="1.300"/><circle cx="15.500" cy="17.500" r="2" fill="#fff"/>`)}</span>
        <span class="g20">${v("0 0 20 20", svg`<path d="M.7 7H4l4-4v14l-4-4H.7z" fill="none" stroke="#fff" stroke-width="1.400"/><path d="M11 7.500q1.500 2.500 0 5M14 5.500q3 4.500 0 9" fill="none" stroke="#fff" stroke-width="1.300"/><path d="M17 2.500q4.500 7.500 0 15" fill="none" stroke="#6f747b" stroke-width="1.300"/>`)}</span>
        <span>РУС</span>
        <div class="clock">12:51<br>11.02.2022</div>
      </div>
      <button class="note" aria-label="Уведомления"><span class="g20">${v("0 0 20 20", svg`<path d="M.7 1.700h18.600V17H13l-3 3-3-3H.7z" fill="none" stroke="#fff" stroke-width="1.400"/>`)}</span></button>
      <span class="edge"></span>`;
  }
}

@customElement("app-root")
class AppRoot extends LitElement {
  static styles = css`
    :host { display: grid; grid-template-columns: minmax(0, 1fr); grid-template-rows: auto minmax(0, 1fr) auto; height: 100vh; overflow: hidden; }
  `;
  render() {
    return html`<browser-chrome></browser-chrome><album-page></album-page><task-bar></task-bar>`;
  }
}
